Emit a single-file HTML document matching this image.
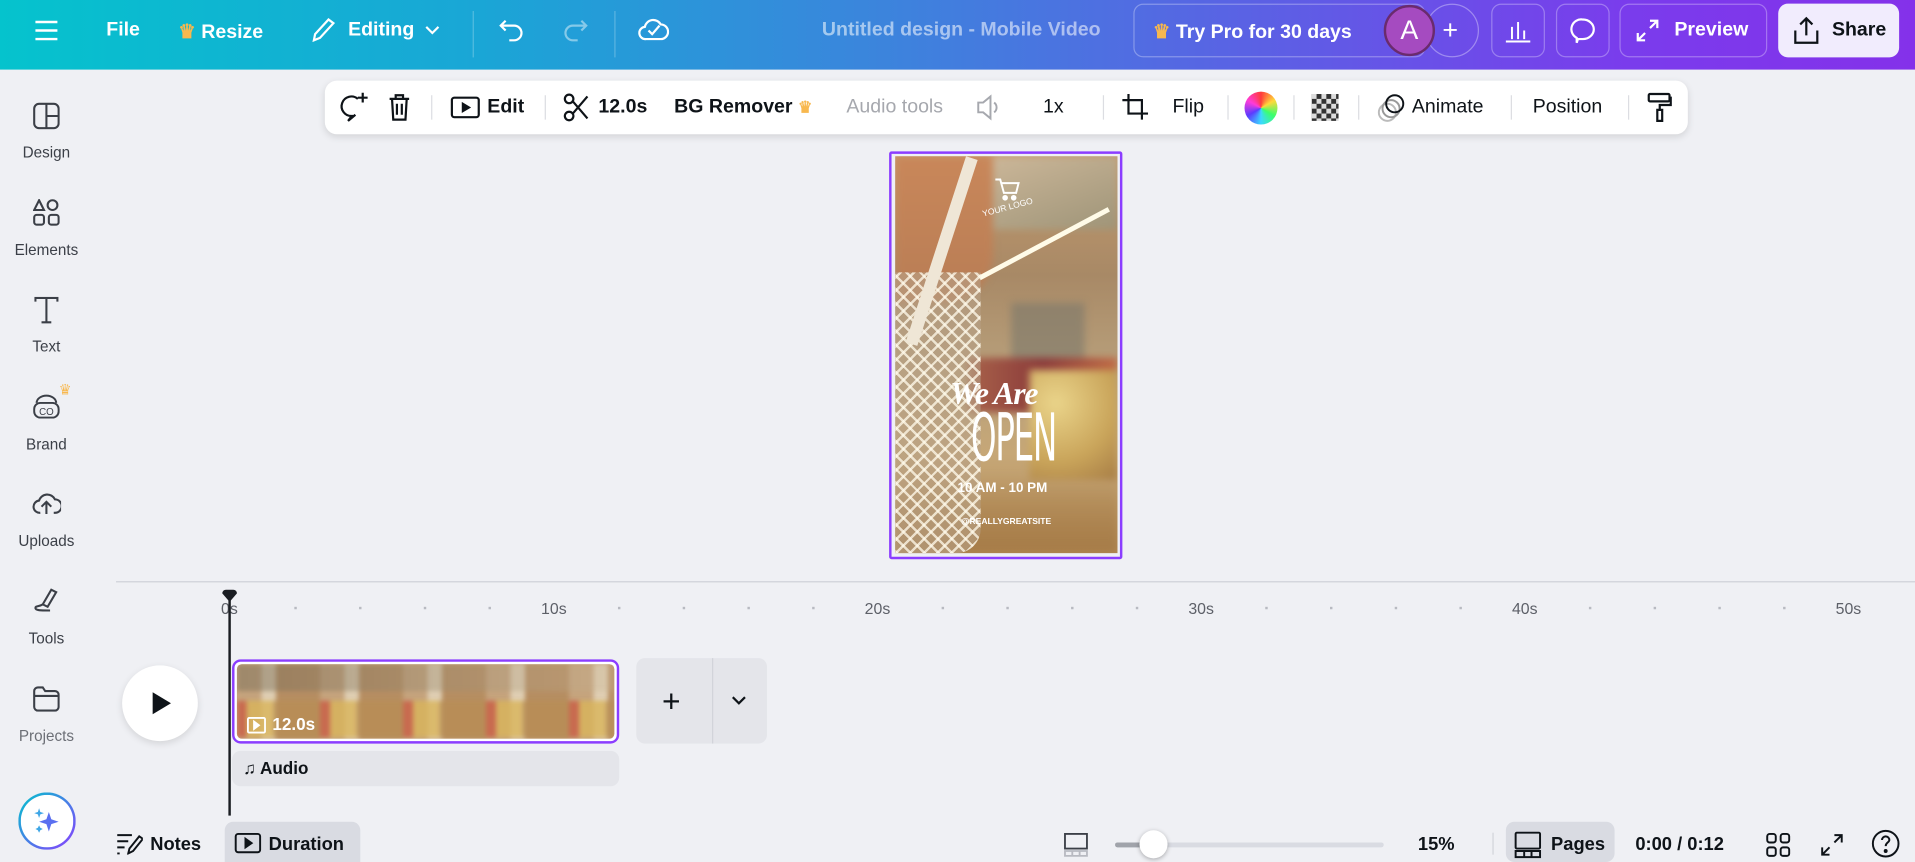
<!DOCTYPE html>
<html><head><meta charset="utf-8"><style>
*{box-sizing:border-box;margin:0;padding:0}
html,body{width:1915px;height:862px;overflow:hidden;background:#eff0f4}
#w{position:absolute;left:0;top:0;width:1568px;height:706px;transform:scale(1.22130,1.22096);transform-origin:0 0;font-family:"Liberation Sans",sans-serif;color:#0e1318}
.a{position:absolute}
.hdr{left:0;top:0;width:1568px;height:57px;background:linear-gradient(90deg,#05c3cd 0%,#1aa6d6 25%,#3a86dc 45%,#5a62e4 65%,#7a3cec 85%,#8431ea 100%)}
.ht{color:#fff;font-weight:bold;font-size:16px;top:16px}
.hb{border:1px solid rgba(255,255,255,.3);border-radius:8px;height:44px;top:3px}
.tb{left:266px;top:66px;width:1116px;height:44px;background:#fff;border-radius:10px;box-shadow:0 2px 6px rgba(0,0,0,.12)}
.tt{font-size:16px;font-weight:bold;top:13px;color:#0e1318}
.sep{width:1px;height:20px;background:#dcdde2;top:12px}
.sl{font-size:12.5px;color:#3b3f47;width:76px;text-align:center;left:0}
.rl{font-size:13px;color:#5d6068;top:491px}
.dot{width:2px;height:2px;background:#b8bac1;top:497px}
svg{position:absolute}
</style></head><body><div id="w">
<div class="a hdr"></div>
<svg style="left:28px;top:15px" width="20" height="20" viewBox="0 0 20 20" stroke="#fff" stroke-width="2"><path d="M1 3h18M1 10h18M1 17h18"/></svg>
<div class="a ht" style="left:87px">File</div>
<div class="a ht" style="left:146px"><span style="color:#f8b84e">♛</span> Resize</div>
<svg style="left:253px;top:13px" width="22" height="24" viewBox="0 0 22 24" fill="none" stroke="#fff" stroke-width="1.8"><path d="M4 20l1-5L16 3l4 3-11 12z"/></svg>
<div class="a ht" style="left:285px">Editing</div>
<svg style="left:347px;top:20px" width="14" height="10" viewBox="0 0 14 10" fill="none" stroke="#fff" stroke-width="1.8"><path d="M2 2l5 5 5-5"/></svg>
<div class="a" style="left:387px;top:9px;width:1px;height:38px;background:rgba(255,255,255,.25)"></div>
<svg style="left:407px;top:14px" width="24" height="22" viewBox="0 0 24 22" fill="none" stroke="#fff" stroke-width="1.8"><path d="M7 3L3 7l4 4M3 7h11a6 6 0 010 12h-4"/></svg>
<svg style="left:459px;top:14px" width="24" height="22" viewBox="0 0 24 22" fill="none" stroke="rgba(255,255,255,.45)" stroke-width="1.8"><path d="M17 3l4 4-4 4M21 7H10a6 6 0 000 12h4"/></svg>
<div class="a" style="left:503px;top:9px;width:1px;height:38px;background:rgba(255,255,255,.25)"></div>
<svg style="left:522px;top:12px" width="26" height="24" viewBox="0 0 26 24" fill="none" stroke="#fff" stroke-width="1.8"><path d="M7 20a5 5 0 01-1-10 7 7 0 0113-2 6 6 0 010 12z"/><path d="M9 13l3 3 6-7"/></svg>
<div class="a ht" style="left:673px;color:rgba(255,255,255,.55)">Untitled design - Mobile Video</div>
<div class="a hb" style="left:928px;width:239px"></div>
<div class="a ht" style="left:944px"><span style="color:#f8b84e">♛</span> Try Pro for 30 days</div>
<div class="a" style="left:1167px;top:3px;width:44px;height:44px;border-radius:50%;border:1px solid rgba(255,255,255,.35)"></div>
<div class="a ht" style="left:1181px;top:12px;font-weight:normal;font-size:22px">+</div>
<div class="a" style="left:1133px;top:4px;width:42px;height:42px;border-radius:50%;background:#a54bc0;border:2px solid #6a2b6d;color:#fff;font-size:22px;text-align:center;line-height:38px">A</div>
<div class="a hb" style="left:1221px;width:44px"></div>
<svg style="left:1232px;top:14px" width="22" height="22" viewBox="0 0 22 22" fill="none" stroke="#fff" stroke-width="1.6"><path d="M1 20h20M6 18V8M11 18V4M16 18v-7"/></svg>
<div class="a hb" style="left:1274px;width:44px"></div>
<svg style="left:1284px;top:13px" width="24" height="24" viewBox="0 0 24 24" fill="none" stroke="#fff" stroke-width="1.8"><path d="M12 3a9 8 0 110 16h-4l-1 3v-4A8 8 0 0112 3z"/></svg>
<div class="a hb" style="left:1326px;width:121px"></div>
<svg style="left:1339px;top:15px" width="20" height="20" viewBox="0 0 20 20" fill="none" stroke="#fff" stroke-width="1.8"><path d="M12 2h6v6M18 2l-6 6M8 18H2v-6M2 18l6-6"/></svg>
<div class="a ht" style="left:1371px">Preview</div>
<div class="a" style="left:1456px;top:3px;width:99px;height:44px;border-radius:8px;background:#f1ecfd"></div>
<svg style="left:1468px;top:13px" width="22" height="24" viewBox="0 0 22 24" fill="none" stroke="#0e1318" stroke-width="1.8"><path d="M2 12v10h18V12M11 16V2M6 7l5-5 5 5"/></svg>
<div class="a ht" style="left:1500px;color:#0e1318">Share</div>

<!-- toolbar -->
<div class="a tb"></div>
<svg style="left:277px;top:75px" width="26" height="28" viewBox="0 0 26 28" fill="none" stroke="#0e1318" stroke-width="1.8"><path d="M16 6a8 8 0 10-5 14l-3 4 6-5"/><path d="M20 1v8M16 5h8"/></svg>
<svg style="left:317px;top:76px" width="20" height="24" viewBox="0 0 20 24" fill="none" stroke="#0e1318" stroke-width="1.8"><path d="M2 5h16M7 5V2h6v3M4 5l1 17h10l1-17M8 9v9M12 9v9"/></svg>
<div class="a sep" style="left:353px;top:78px"></div>
<svg style="left:368px;top:78px" width="26" height="20" viewBox="0 0 26 20" fill="none" stroke="#0e1318" stroke-width="1.8"><rect x="2" y="2" width="22" height="16" rx="2"/><path d="M11 7v6l5-3z" fill="#0e1318"/></svg>
<div class="a tt" style="left:399px;top:79px">Edit</div>
<div class="a sep" style="left:446px;top:78px"></div>
<svg style="left:461px;top:76px" width="22" height="24" viewBox="0 0 22 24" fill="none" stroke="#0e1318" stroke-width="1.8"><circle cx="5" cy="5" r="3.5"/><circle cx="5" cy="19" r="3.5"/><path d="M8 7l12 14M8 17L20 3"/></svg>
<div class="a tt" style="left:490px;top:79px">12.0s</div>
<div class="a tt" style="left:552px;top:79px">BG Remover <span style="color:#f8b84e;font-size:13px">♛</span></div>
<div class="a tt" style="left:693px;top:79px;color:#a6a8ae;font-weight:normal">Audio tools</div>
<svg style="left:798px;top:77px" width="24" height="22" viewBox="0 0 24 22" fill="none" stroke="#a6a8ae" stroke-width="1.6"><path d="M3 7h4l6-5v18l-6-5H3z"/><path d="M16 7a5 5 0 010 8"/></svg>
<div class="a tt" style="left:854px;top:79px;font-weight:normal">1x</div>
<div class="a sep" style="left:903px;top:78px"></div>
<svg style="left:918px;top:76px" width="24" height="24" viewBox="0 0 24 24" fill="none" stroke="#0e1318" stroke-width="1.8"><path d="M6 1v16h16M1 6h16v16"/></svg>
<div class="a tt" style="left:960px;top:79px;font-weight:normal">Flip</div>
<div class="a sep" style="left:1005px;top:78px"></div>
<div class="a" style="left:1019px;top:75px;width:27px;height:27px;border-radius:50%;background:conic-gradient(#ff3b3b,#ffd93b,#3bff6b,#3bd9ff,#5b3bff,#ff3bd9,#ff3b3b)"></div>
<div class="a sep" style="left:1059px;top:78px"></div>
<div class="a" style="left:1074px;top:77px;width:22px;height:22px;background:repeating-conic-gradient(#333 0 25%,#ddd 0 50%) 0 0/8px 8px"></div>
<div class="a sep" style="left:1112px;top:78px"></div>
<svg style="left:1126px;top:76px" width="26" height="26" viewBox="0 0 26 26" fill="none" stroke-width="1.6"><circle cx="10" cy="16" r="7" stroke="#bbb"/><circle cx="13" cy="13" r="7" stroke="#999"/><circle cx="16" cy="9" r="7" stroke="#0e1318"/></svg>
<div class="a tt" style="left:1156px;top:79px;font-weight:normal">Animate</div>
<div class="a sep" style="left:1237px;top:78px"></div>
<div class="a tt" style="left:1255px;top:79px;font-weight:normal">Position</div>
<div class="a sep" style="left:1333px;top:78px"></div>
<svg style="left:1348px;top:75px" width="22" height="26" viewBox="0 0 22 26" fill="none" stroke="#0e1318" stroke-width="1.8"><rect x="2" y="2" width="17" height="6" rx="1"/><path d="M19 5h1v6h-9v4M9 15h4v9H9z"/></svg>

<!-- sidebar -->
<svg style="left:27px;top:84px" width="22" height="22" viewBox="0 0 22 22" fill="none" stroke="#3b3f47" stroke-width="1.7"><rect x="1" y="1" width="20" height="20" rx="4"/><path d="M11 1v20M11 11h10"/></svg>
<div class="a sl" style="top:118px">Design</div>
<svg style="left:27px;top:163px" width="22" height="22" viewBox="0 0 22 22" fill="none" stroke="#3b3f47" stroke-width="1.7"><path d="M5 1l4 8H1z"/><circle cx="16" cy="5" r="4"/><rect x="1" y="13" width="8" height="8" rx="2"/><rect x="13" y="13" width="8" height="8" rx="2"/></svg>
<div class="a sl" style="top:198px">Elements</div>
<svg style="left:28px;top:243px" width="20" height="22" viewBox="0 0 20 22" fill="none" stroke="#3b3f47" stroke-width="1.7"><path d="M1 4V1h18v3M10 1v20M6 21h8"/></svg>
<div class="a sl" style="top:277px">Text</div>
<svg style="left:26px;top:322px" width="24" height="22" viewBox="0 0 24 22" fill="none" stroke="#3b3f47" stroke-width="1.6"><path d="M4 8a8 6 0 0116 0"/><rect x="2" y="8" width="20" height="12" rx="5"/><text x="6" y="18" font-size="8" fill="#3b3f47" stroke="none" font-family="Liberation Sans">CO</text></svg>
<div class="a" style="left:48px;top:312px;color:#f8b84e;font-size:12px">♛</div>
<div class="a sl" style="top:357px">Brand</div>
<svg style="left:26px;top:402px" width="24" height="20" viewBox="0 0 24 20" fill="none" stroke="#3b3f47" stroke-width="1.7"><path d="M7 18a5 5 0 01-1-10 7 7 0 0113-1 5 5 0 010 11h-1"/><path d="M12 19v-9M8 13l4-4 4 4"/></svg>
<div class="a sl" style="top:436px">Uploads</div>
<svg style="left:27px;top:481px" width="22" height="22" viewBox="0 0 22 22" fill="none" stroke="#3b3f47" stroke-width="1.7"><path d="M8 14L15 2l4 2-7 12zM8 14c-3 2-6 1-6 3s4 2 12 2"/></svg>
<div class="a sl" style="top:516px">Tools</div>
<svg style="left:27px;top:561px" width="22" height="22" viewBox="0 0 22 22" fill="none" stroke="#3b3f47" stroke-width="1.7"><path d="M1 5a3 3 0 013-3h4l2 3h8a3 3 0 013 3v10a3 3 0 01-3 3H4a3 3 0 01-3-3zM1 9h20"/></svg>
<div class="a sl" style="top:596px;color:#6c6f76">Projects</div>
<div class="a" style="left:15px;top:649px;width:47px;height:47px;border-radius:50%;background:linear-gradient(#fff,#fff) padding-box,linear-gradient(135deg,#00c4cc,#8b3dff) border-box;border:2px solid transparent"></div>
<svg style="left:27px;top:660px" width="24" height="24" viewBox="0 0 24 24" fill="#5a6ff0"><path d="M13 5l2 6 6 2-6 2-2 6-2-6-6-2 6-2z"/><path d="M5 2l1 3 3 1-3 1-1 3-1-3-3-1 3-1zM5 16l1 2 2 1-2 1-1 2-1-2-2-1 2-1z" fill="#3ea6e6"/></svg>

<!-- canvas -->
<div class="a" style="left:728px;top:124px;width:191px;height:334px;border:2px solid #8b3dff;border-radius:2px"></div>
<div class="a" style="left:733px;top:128px;width:182px;height:325px;overflow:hidden;background:linear-gradient(180deg,#c49a6e 0%,#a88966 30%,#b9a17c 55%,#c6a777 75%,#b38a55 100%)">
 <div class="a" style="left:0;top:0;width:182px;height:325px;filter:blur(3px)">
 <div class="a" style="left:70px;top:0;width:112px;height:60px;background:linear-gradient(160deg,#cdb89a,#9e9478)"></div>
 <div class="a" style="left:0;top:0;width:80px;height:120px;background:linear-gradient(180deg,#c9875a,#b87d55);border-radius:0 0 40px 0"></div>
 <div class="a" style="left:95px;top:120px;width:60px;height:60px;background:#7b786a;opacity:.6"></div>
 <div class="a" style="left:60px;top:165px;width:122px;height:45px;background:linear-gradient(90deg,#a8624a,#8b3a3a,#c06a45)"></div>
 <div class="a" style="left:110px;top:175px;width:72px;height:90px;background:radial-gradient(circle at 30% 30%,#ead48a,#c9a45a 60%,#a67c45)"></div>
 <div class="a" style="left:0;top:260px;width:182px;height:65px;background:linear-gradient(180deg,rgba(180,140,90,0),#a67c48)"></div>
 </div>
 <div class="a" style="left:68px;top:98px;width:120px;height:4px;background:#fffbe8;transform:rotate(-28deg);transform-origin:0 0"></div>
 <div class="a" style="left:0;top:95px;width:70px;height:230px;background:repeating-linear-gradient(45deg,rgba(255,250,235,.75) 0 2px,transparent 2px 8px),repeating-linear-gradient(-45deg,rgba(255,250,235,.75) 0 2px,transparent 2px 8px),rgba(183,162,136,.6);border-radius:0 0 20px 0"></div>
 <div class="a" style="left:58px;top:0;width:10px;height:160px;background:#efe6d6;transform:rotate(18deg);transform-origin:0 0"></div>
 <svg style="left:81px;top:17px" width="22" height="20" viewBox="0 0 22 20" fill="none" stroke="#fff" stroke-width="1.6"><path d="M1 2h4l3 11h10l2-8H6"/><circle cx="9" cy="17" r="1.5" fill="#fff"/><circle cx="16" cy="17" r="1.5" fill="#fff"/></svg>
 <div class="a" style="left:71px;top:39px;color:#fff;font-size:7px;transform:rotate(-15deg)">YOUR LOGO</div>
 <div class="a" style="left:45px;top:180px;color:#fff;font-family:'Liberation Serif',serif;font-style:italic;font-weight:bold;font-size:26px;letter-spacing:-1px">We Are</div>
 <div class="a" style="left:62px;top:204px;color:#fff;font-size:54px;transform:scaleX(.55);transform-origin:0 0;font-family:'DejaVu Sans Condensed','Liberation Sans Narrow',sans-serif;letter-spacing:-2px;line-height:1">OPEN</div>
 <div class="a" style="left:51px;top:266px;color:#fff;font-weight:bold;font-size:11px">10 AM - 10 PM</div>
 <div class="a" style="left:54px;top:296px;color:#fff;font-weight:bold;font-size:7px">@REALLYGREATSITE</div>
</div>

<!-- timeline -->
<div class="a" style="left:95px;top:476px;width:1473px;height:1px;background:#cfd1d8"></div>
<div class="a rl" style="left:181px">0s</div>
<div class="a rl" style="left:443px">10s</div>
<div class="a rl" style="left:708px">20s</div>
<div class="a rl" style="left:973px">30s</div>
<div class="a rl" style="left:1238px">40s</div>
<div class="a rl" style="left:1503px">50s</div>
<div class="a dot" style="left:241px"></div><div class="a dot" style="left:294px"></div><div class="a dot" style="left:347px"></div><div class="a dot" style="left:400px"></div>
<div class="a dot" style="left:506px"></div><div class="a dot" style="left:559px"></div><div class="a dot" style="left:612px"></div><div class="a dot" style="left:665px"></div>
<div class="a dot" style="left:771px"></div><div class="a dot" style="left:824px"></div><div class="a dot" style="left:877px"></div><div class="a dot" style="left:930px"></div>
<div class="a dot" style="left:1036px"></div><div class="a dot" style="left:1089px"></div><div class="a dot" style="left:1142px"></div><div class="a dot" style="left:1195px"></div>
<div class="a dot" style="left:1301px"></div><div class="a dot" style="left:1354px"></div><div class="a dot" style="left:1407px"></div><div class="a dot" style="left:1460px"></div>
<div class="a" style="left:187px;top:487px;width:2px;height:181px;background:#1a1d22"></div>
<svg style="left:181px;top:482px" width="14" height="12" viewBox="0 0 14 12"><path d="M1 4a3 3 0 013-3h6a3 3 0 013 3l-6 7z" fill="#1a1d22"/></svg>
<div class="a" style="left:100px;top:545px;width:62px;height:62px;border-radius:50%;background:#fff;box-shadow:0 2px 6px rgba(0,0,0,.12)"></div>
<svg style="left:124px;top:566px" width="18" height="20" viewBox="0 0 18 20"><path d="M1 1l15 9-15 9z" fill="#0e1318"/></svg>
<div class="a" style="left:190px;top:540px;width:317px;height:69px;border:2px solid #8b3dff;border-radius:7px;padding:2px;background:#fff">
 <div style="width:100%;height:100%;border-radius:4px;background:#c6a47d;position:relative;overflow:hidden">
  <div class="a" style="left:0;top:0;width:100%;height:100%;filter:blur(2px);background:repeating-linear-gradient(90deg,#c6a47d 0 20px,#e0cfb3 20px 32px,#b78e62 32px 68px)"></div>
  <div class="a" style="left:0;top:0;width:100%;height:22px;filter:blur(2px);background:linear-gradient(90deg,rgba(120,110,90,.5),rgba(200,180,150,.3))"></div>
  <div class="a" style="left:0;top:30px;width:100%;height:30px;filter:blur(2px);background:repeating-linear-gradient(90deg,#c95c44 0 8px,#d9b45a 8px 30px,#b88e55 30px 68px);opacity:.8"></div>
 </div>
</div>
<svg style="left:202px;top:587px" width="16" height="14" viewBox="0 0 16 14" fill="none" stroke="#fff" stroke-width="1.5"><rect x="1" y="1" width="14" height="12" rx="1"/><path d="M6 4v6l4-3z" fill="#fff"/></svg>
<div class="a" style="left:223px;top:585px;color:#fff;font-weight:bold;font-size:14px">12.0s</div>
<div class="a" style="left:521px;top:539px;width:107px;height:70px;background:#e4e5ea;border-radius:7px"></div>
<div class="a" style="left:583px;top:539px;width:1px;height:70px;background:#d2d4da"></div>
<div class="a" style="left:542px;top:559px;font-size:26px;font-weight:normal">+</div>
<svg style="left:598px;top:569px" width="14" height="10" viewBox="0 0 14 10" fill="none" stroke="#0e1318" stroke-width="1.8"><path d="M2 2l5 5 5-5"/></svg>
<div class="a" style="left:190px;top:615px;width:317px;height:29px;background:#e4e5ea;border-radius:7px"></div>
<div class="a" style="left:199px;top:621px;font-size:14px;font-weight:bold">♫ Audio</div>

<!-- bottom -->
<svg style="left:95px;top:682px" width="22" height="18" viewBox="0 0 22 18" fill="none" stroke="#0e1318" stroke-width="1.6"><path d="M1 2h12M1 7h9M1 12h6M1 17h2M10 17l1-4 8-10 3 2-8 10z"/></svg>
<div class="a" style="left:123px;top:683px;font-size:15px;font-weight:bold">Notes</div>
<div class="a" style="left:184px;top:673px;width:111px;height:33px;background:#d9dbe2;border-radius:7px 7px 0 0"></div>
<svg style="left:192px;top:682px" width="22" height="17" viewBox="0 0 22 17" fill="none" stroke="#0e1318" stroke-width="1.6"><rect x="1" y="1" width="20" height="15" rx="2"/><path d="M9 5v7l5-3.5z" fill="#0e1318"/></svg>
<div class="a" style="left:220px;top:683px;font-size:15px;font-weight:bold">Duration</div>
<svg style="left:871px;top:682px" width="20" height="20" viewBox="0 0 20 20" fill="none" stroke-width="1.5"><rect x="1" y="1" width="18" height="12" stroke="#3b3f47"/><path d="M1 15h18v4H1zM7 15v4M13 15v4" stroke="#b8bac1"/></svg>
<div class="a" style="left:913px;top:690px;width:220px;height:4px;background:#d9dbe2;border-radius:2px"></div>
<div class="a" style="left:913px;top:690px;width:25px;height:4px;background:#a0a3aa;border-radius:2px"></div>
<div class="a" style="left:933px;top:680px;width:23px;height:23px;border-radius:50%;background:#fff;box-shadow:0 1px 4px rgba(0,0,0,.3)"></div>
<div class="a" style="left:1161px;top:683px;font-size:15px;font-weight:bold">15%</div>
<div class="a" style="left:1222px;top:682px;width:1px;height:18px;background:#d2d4da"></div>
<div class="a" style="left:1233px;top:673px;width:89px;height:33px;background:#d9dbe2;border-radius:7px"></div>
<svg style="left:1240px;top:681px" width="22" height="22" viewBox="0 0 22 22" fill="none" stroke="#0e1318" stroke-width="1.6"><rect x="1" y="1" width="20" height="13" rx="1"/><path d="M1 16h20v5H1zM8 16v5M14 16v5"/></svg>
<div class="a" style="left:1270px;top:683px;font-size:15px;font-weight:bold">Pages</div>
<div class="a" style="left:1339px;top:683px;font-size:15px;font-weight:bold">0:00 / 0:12</div>
<svg style="left:1446px;top:682px" width="20" height="20" viewBox="0 0 20 20" fill="none" stroke="#0e1318" stroke-width="1.6"><rect x="1" y="1" width="7" height="7" rx="2"/><rect x="12" y="1" width="7" height="7" rx="2"/><rect x="1" y="12" width="7" height="7" rx="2"/><rect x="12" y="12" width="7" height="7" rx="2"/></svg>
<svg style="left:1490px;top:682px" width="20" height="20" viewBox="0 0 20 20" fill="none" stroke="#0e1318" stroke-width="1.6"><path d="M12 2h6v6M18 2l-6 6M8 18H2v-6M2 18l6-6"/></svg>
<svg style="left:1532px;top:679px" width="24" height="24" viewBox="0 0 24 24" fill="none" stroke="#0e1318" stroke-width="1.6"><circle cx="12" cy="12" r="10.5"/><path d="M9 9a3 3 0 116 0c0 2-3 2-3 5"/><circle cx="12" cy="18" r=".8" fill="#0e1318"/></svg>
</div></body></html>
